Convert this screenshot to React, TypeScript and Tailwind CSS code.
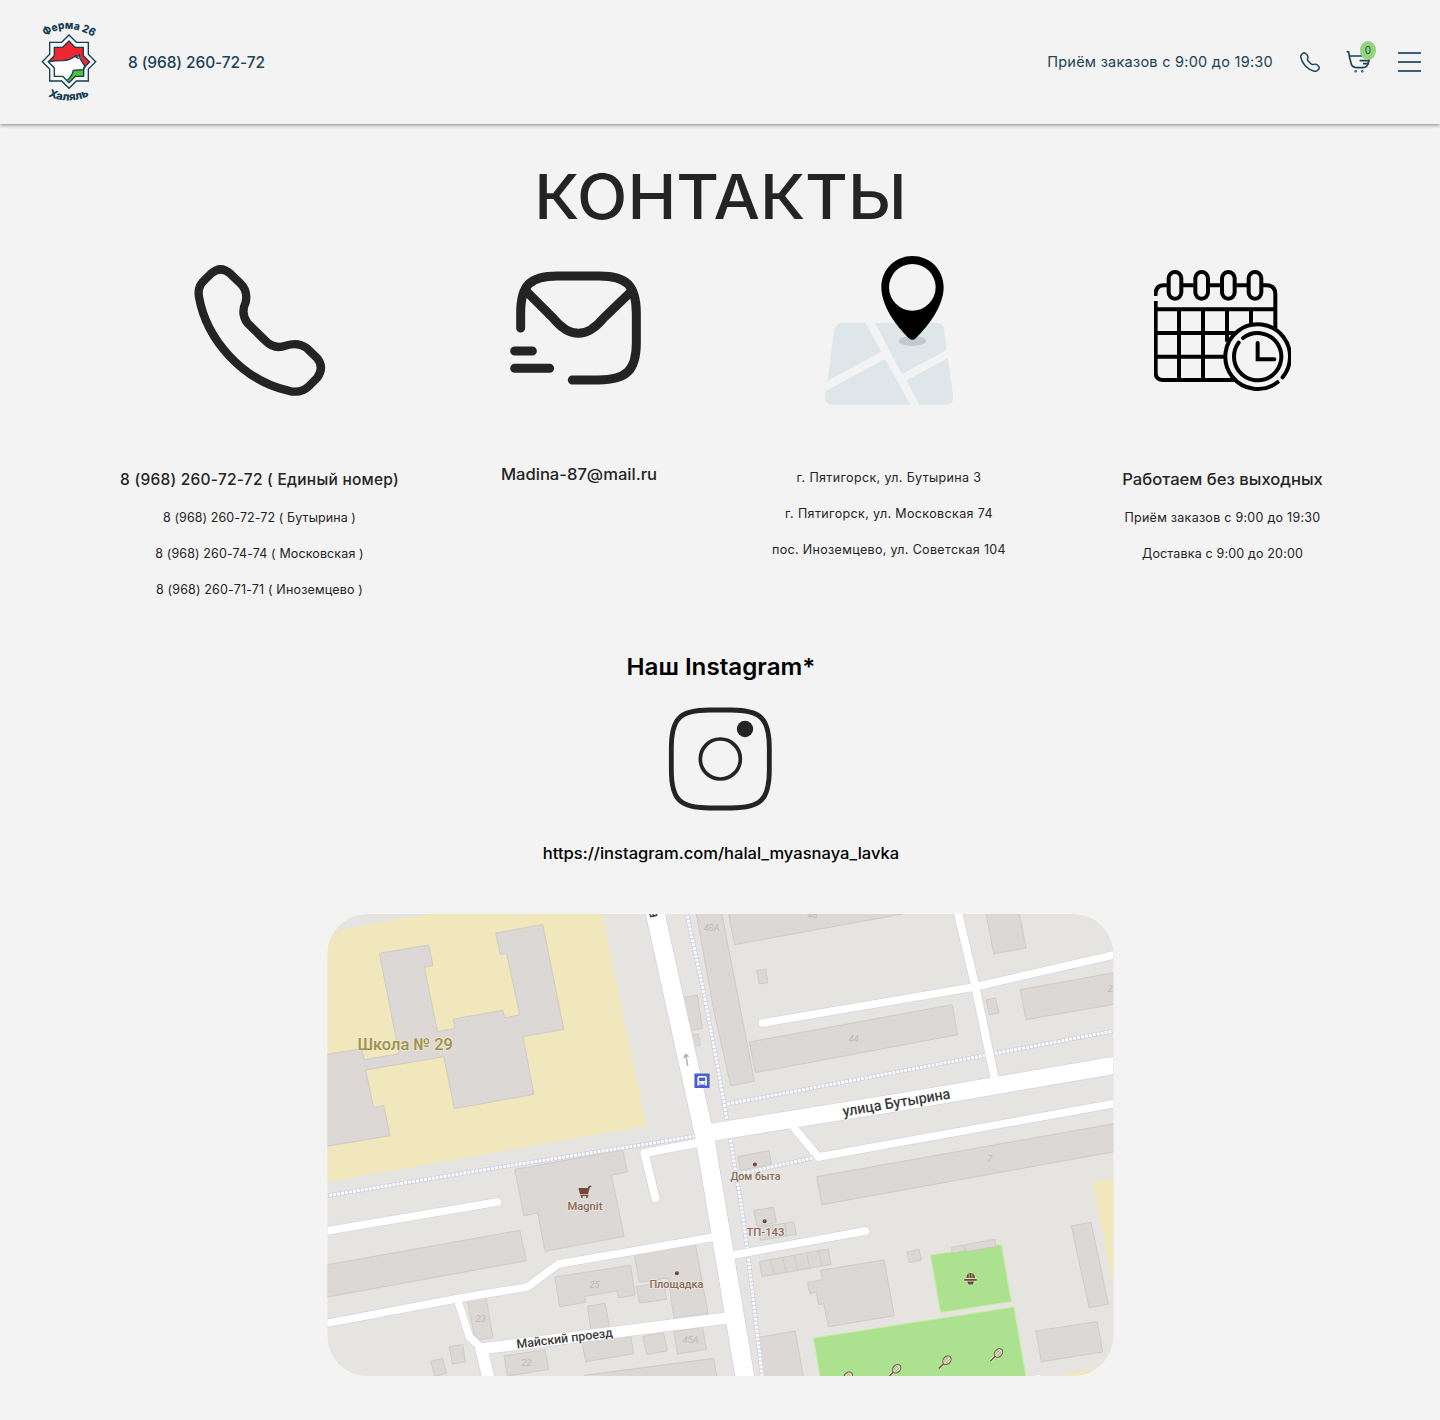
import type { ReactNode } from "react";

const PHONE =
  "M93 70 Q122 44 151 70 L183 101 Q204 122 197 156 Q181 190 203 219 L258 273 Q283 298 318 286 Q354 274 380 293 L411 323 Q434 350 412 382 L386 408 Q362 431 325 421 C190 391 80 270 57 140 Q52 112 69 94 Z";

function PhoneIcon({ className }: { className: string }) {
  return (
    <svg viewBox="42 41 396 396" className={className} fill="none" stroke="currentColor" strokeLinejoin="round">
      <path d={PHONE} />
    </svg>
  );
}

function Logo() {
  return (
    <svg viewBox="0 0 240 285" className="h-[95px] w-20 font-['Inter'] font-extrabold">
      <defs>
        <path id="logo-top" d="M46 64 Q113 16 196 70" />
        <path id="logo-bottom" d="M54 243 Q117 272 184 239" />
      </defs>
      <path
        d="M117 60 L139 82 H175 V118 L197 140 L175 162 V198 H139 L117 220 L95 198 H59 V162 L37 140 L59 118 V82 H95 Z"
        fill="#f6f6f4"
        stroke="#173e52"
        strokeWidth="4"
      />
      <path d="M117 78 L135 97 H160 V122 L179 141 L161 159 V184 H136 L117 203 L98 184 H73 V159 L55 140 L73 122 V97 H98 Z" fill="#fff" />
      <path d="M55 140 L73 122 V97 H98 L117 78 L135 97 H160 V122 L179 141 L166 155 L154 134 L148 120 L136 125 Q118 136 100 137 Q74 137 55 140 Z" fill="#ee2630" />
      <path d="M117 203 L113 194 Q126 185 129 165 L161 163 V184 H136 Z" fill="#52bf3c" />
      <g fill="none" stroke="#173e52" strokeWidth="4" strokeLinejoin="round">
        <path d="M117 78 L135 97 H160 V122 L179 141 L161 159 V184 H136 L117 203 L98 184 H73 V159 L55 140 L73 122 V97 H98 Z" />
        <path d="M55 140 Q74 137 100 137 Q118 136 132 126 L138 122 L143 125 L148 119 L150 130 L165 155 L160 164 L130 166 Q126 184 112 195" />
        <path d="M136 126 L147 131" />
      </g>
      <g fill="#173e52" fontSize="33">
        <text>
          <textPath href="#logo-top" textLength="153" lengthAdjust="spacingAndGlyphs">Ферма 26</textPath>
        </text>
        <text>
          <textPath href="#logo-bottom" textLength="128" lengthAdjust="spacingAndGlyphs">Халяль</textPath>
        </text>
      </g>
    </svg>
  );
}

function CartIcon() {
  return (
    <svg viewBox="946 90 84 72" className="h-6 w-7" fill="none" stroke="#1b4256" strokeWidth="5" strokeLinecap="round">
      <path d="M953 95 L957 96 Q959 112 965 133 Q969 143 984 143 H1000 Q1013 143 1016 128 L1020 108 H960" />
      <path d="M992 122 H1018 M1002 131 H1015" />
      <circle cx="978" cy="153.500" r="1.200" />
      <circle cx="998" cy="153.500" r="1.200" />
    </svg>
  );
}

function MailIcon() {
  return (
    <svg viewBox="990 60 411 348" className="mt-[38px] h-[116px] w-[137px]" fill="none" stroke="#242424" strokeWidth="27" strokeLinecap="round">
      <path d="M1022 234 V190 C1022 105 1050 78 1132 78 H1258 C1340 78 1369 106 1369 190 V278 C1369 362 1339 390 1255 390 H1177" />
      <path d="M1040 125 L1120 205 Q1195 295 1270 205 L1353 125" strokeLinecap="butt" />
      <path d="M1004 303 H1057 M1004 355 H1109" />
    </svg>
  );
}

function PinIcon() {
  return (
    <svg viewBox="42 30 390 453" className="mt-[23px] h-[151px] w-[130px]">
      <g fill="#dee6e9">
        <path d="M97 234 H167 L214 320 L52 408 L73 255 Q77 234 97 234 Z" />
        <path d="M195 234 H381 Q399 235 402 252 L409 316 L276 387 Z" />
        <path d="M225 342 L301 479 H65 Q44 477 45 455 L47 438 Z" />
        <path d="M413 340 L430 455 Q430 477 410 479 H328 L290 406 Z" />
      </g>
      <ellipse cx="307" cy="288" rx="41" ry="15" fill="#c0cacc" />
      <path
        fillRule="evenodd"
        d="M307 33 C255 33 214 74 214 127 C214 180 255 240 297 280 Q307 289 317 280 C359 240 401 180 401 127 C401 74 360 33 307 33 Z M307 57 A70 70 0 1 1 307 197 A70 70 0 1 1 307 57 Z"
        fill="#000"
      />
    </svg>
  );
}

function CalendarIcon() {
  return (
    <svg viewBox="1032 72 411 369" className="mt-[37px] h-[123px] w-[137px]" fill="none" stroke="#000" strokeWidth="12" strokeLinecap="round">
      {[1076, 1156, 1236, 1316].map((x) => (
        <rect key={x} x={x} y="81" width="38" height="80" rx="19" />
      ))}
      <g strokeLinecap="butt">
        <path d="M1036 153 Q1036 121 1060 121 H1071 M1119 121 H1151 M1199 121 H1231 M1279 121 H1311 M1359 121 H1370 Q1396 121 1396 147 V250" />
        <path d="M1037 168 V383 Q1037 405 1059 405 H1277 M1037 193 H1396 M1037 264 H1278 M1037 335 H1248" />
        <path d="M1107 193 V405 M1179 193 V405 M1251 193 V290 M1323 193 V238" />
      </g>
      <circle cx="1343" cy="335" r="97" pathLength="360" strokeDasharray="347.4 12.6" transform="rotate(52.2 1343 335)" />
      <circle cx="1343" cy="335" r="71" pathLength="360" strokeDasharray="342.6 17.4" transform="rotate(232 1343 335)" />
      <path d="M1343 294 V343 H1393" />
    </svg>
  );
}

function InstagramIcon() {
  return (
    <svg viewBox="444 201 312 312" className="mt-[22px] h-[104px] w-[104px]" fill="none" stroke="#242424">
      <path d="M454 325 C454 235 479 210 569 210 H633 C723 210 748 235 748 325 V389 C748 479 723 504 633 504 H569 C479 504 454 479 454 389 Z" strokeWidth="14.500" />
      <circle cx="601" cy="357" r="60" strokeWidth="11" />
      <circle cx="675" cy="267" r="24.500" fill="#242424" stroke="none" />
    </svg>
  );
}

const ROADS: [string, number][] = [
  ["M762 1023 L974 987 L1120 953.500", 7.5],
  ["M956 906 L975 987 L995 1082", 8],
  ["M793 1127 L818 1157 L1120 1102.500", 7.5],
  ["M655 1198 L644 1153 L702 1142", 8],
  ["M320 1232 L497 1202", 7.5],
  ["M320 1324.500 L460 1298 L527 1287 L558 1264 L720 1236", 7.5],
  ["M457 1299 L469 1337 L482 1349", 7.5],
  ["M733 1255 L865 1231", 7.5],
  ["M481 1349 L489 1382", 12],
  ["M484 1348.500 L600 1334 L735 1317", 11],
  ["M707 1133 L900 1102 L1122 1064", 17],
  ["M653 905 L704.500 1138 L724.500 1258 L746 1386", 18.5],
];

const PATHS = [
  "M686 912 L702 986 L717 1065 L730 1140 L740 1200 L747 1250 L762 1378",
  "M727 1104 L1116 1030.500",
  "M325 1196 L507 1166 L653 1143 L694 1136",
  "M743 1173 L812 1158",
];

function Racket({ x, y }: { x: number; y: number }) {
  return (
    <g transform={`translate(${x} ${y}) rotate(45)`} stroke="#755241" fill="none">
      <path d="M0 2 V9" stroke="#e9f3dc" strokeWidth="2.800" />
      <ellipse cx="0" cy="-2.500" rx="3.600" ry="4.800" fill="#d4e8bd" strokeWidth="1" />
      <path d="M-1.300 -6.500 V1.500 M1.300 -6.500 V1.500 M-3.300 -3.700 H3.300 M-3.300 -1 H3.300" strokeWidth=".3" />
      <path d="M0 2 V9" strokeWidth="1.500" />
    </g>
  );
}

type LabelProps = {
  x: number;
  y: number;
  w: number;
  size: number;
  color: string;
  rotate?: number;
  halo?: string;
  children: ReactNode;
};

function Label({ x, y, w, size, color, rotate = 0, halo = "#ece9e6", children }: LabelProps) {
  return (
    <text
      transform={`translate(${x} ${y}) rotate(${rotate})`}
      fontSize={size}
      fill={color}
      textLength={w}
      lengthAdjust="spacingAndGlyphs"
      stroke={halo}
      strokeOpacity=".8"
      strokeWidth="2"
      paintOrder="stroke"
      strokeLinejoin="round"
      className="font-['Roboto'] font-medium"
    >
      {children}
    </text>
  );
}

function StreetMap() {
  return (
    <svg viewBox="327 914 786 462" className="mt-12 h-[462px] w-[786px] translate-x-[0.4px] rounded-[40px]">
      <rect x="327" y="914" width="787" height="462" fill="#e5e4e0" />
      <g fill="#f0e7bc">
        <path d="M327 932 L427 914 H602 L646 1126 L327 1182 Z" />
        <path d="M1092 1182 L1114 1178 V1292 Z" />
        <path d="M1055 1376 L1114 1365 V1376 Z" />
      </g>
      <g fill="#ace18f" stroke="#c9ecaa" strokeWidth="1.200">
        <path d="M930 1255 L1001 1244.500 L1011 1301.500 L940 1312.500 Z" />
        <path d="M813 1338 L1013.500 1307 L1027 1385 L821 1385 Z" />
      </g>

      <g fill="#dcd8d5" stroke="#c9c5c3" strokeWidth="2.400">
        <g transform="translate(320 905) scale(.33333)">
          <path d="M177 145 L325 120 L338 181 L312 187 L351 380 L404 370 L399 342 L547 316 L553 338 L598 330 L559 146 L540 149 L526 84 L667 59 L730 373 L608 395 L640 568 L402 611 L370 455 L136 495 L159 607 L190 602 L209 692 L0 727 V451 L124 431 L132 464 L236 446 Z" />
          <path d="M1088 277 L1131 270 L1146 370 L1110 376 M1112 391 L1133 387 L1140 420 L1120 424" />
        </g>
        <g transform="translate(715 905) scale(.33333)">
          <path d="M-62 0 L18 20 L117 529 L46 542 L-3 325 Z" />
          <path d="M32 -10 L58 119 L560 27 V-10 Z M124 197 L151 193 L157 233 L132 237 Z M102 411 L710 299 L727 389 L120 503 Z" />
          <path d="M805 -10 L835 146 L932 129 L905 -10 Z M914 254 L1230 197 V292 L932 344 Z M812 285 L840 279 L851 323 L822 329 Z" />
        </g>
        <g transform="translate(320 1140) scale(.33333)">
          <path d="M583 88 L907 30 L921 96 L873 105 L911 289 L674 334 L652 219 L611 227 Z M0 378 L598 271 L618 362 L0 475 Z" />
          <path d="M703 411 L931 376 L944 465 L895 474 L891 453 L793 469 L796 487 L718 500 Z" />
          <path d="M942 344 L1125 313 L1163 520 L1061 533 L1042 414 L957 427 Z M948 440 L1030 426 L1039 478 L957 489 Z" />
          <path d="M440 482 L497 474 L518 592 L466 602 Z M801 498 L854 490 L867 562 L812 572 Z M785 606 L930 585 L940 641 L796 665 Z M967 590 L1029 578 L1042 632 L980 644 Z M1060 574 L1146 562 L1158 628 L1072 642 Z" />
          <path d="M551 648 L674 629 L685 688 L561 708 Z M387 620 L427 614 L435 665 L396 672 Z M331 664 L366 655 L378 699 L344 710 Z M792 706 L1180 655 L1192 730 H795 Z" />
        </g>
        <g transform="translate(715 1140) scale(.33333)">
          <path d="M303 110 L1230 -55 V29 L320 194 Z M67 50 L161 32 L168 72 L76 91 Z M115 211 L174 202 L183 247 L125 260 Z M128 262 L235 246 L243 283 L135 301 Z" />
          <path d="M132 365 L338 327 L347 373 L140 410 Z M165 359 L177 403 M201 352 L212 397 M236 346 L248 391 M273 340 L284 384 M308 333 L320 378 M170 256 L176 294 M207 250 L215 288" />
          <path d="M316 391 L506 360 L537 527 L339 560 L325 491 L310 494 L303 457 L283 461 L276 428 L321 419 Z M574 336 L611 328 L618 360 L582 368 Z M708 322 L745 315 L748 332 L711 339 Z M750 314 L838 298 L842 319 L753 335 Z" />
          <path d="M1068 258 L1127 247 L1179 493 L1121 503 Z M961 573 L1145 545 L1162 636 L978 665 Z M130 592 L239 573 L268 730 H145 Z" />
        </g>
      </g>

      <g fill="none" strokeLinejoin="round">
        {PATHS.map((d) => (
          <g key={d}>
            <path d={d} stroke="#d0d2e0" strokeWidth="4.400" />
            <path d={d} stroke="#ffffff" strokeWidth="2.900" strokeDasharray="2.700 1.300" />
          </g>
        ))}
        {ROADS.map(([d, w]) => (
          <path key={d} d={d} stroke="#d6d8e8" strokeWidth={w + 1.8} strokeLinecap="round" />
        ))}
        {ROADS.map(([d, w]) => (
          <path key={d} d={d} stroke="#ffffff" strokeWidth={w} strokeLinecap="round" />
        ))}
      </g>
      <circle cx="1038" cy="1378" r="3" fill="#fff" />

      <g fill="#bdbab7" fontSize="9.500" className="font-['Roboto'] italic">
        <text x="703" y="931">48А</text>
        <text x="807" y="918">48</text>
        <text x="848" y="1042">44</text>
        <text x="1107" y="992">2</text>
        <text x="987" y="1162" fontSize="8.500">7</text>
        <text x="589" y="1288">25</text>
        <text x="475" y="1322">23</text>
        <text x="521" y="1366">22</text>
        <text x="682" y="1343">45А</text>
      </g>

      <Label x={357} y={1049.5} w={95.5} size={16.5} color="#9c9152" halo="#f0e7c8">Школа № 29</Label>
      <Label x={843} y={1116.5} w={109} size={15} color="#3c3c3c" halo="#ffffff" rotate={-9.5}>улица Бутырина</Label>
      <Label x={516.5} y={1348.5} w={97} size={12.5} color="#3c3c3c" halo="#ffffff" rotate={-7}>Майский проезд</Label>
      <Label x={567} y={1210} w={35} size={11} color="#8b6b58">Magnit</Label>
      <Label x={649} y={1288} w={54} size={11} color="#8b6b58">Площадка</Label>
      <Label x={730} y={1180} w={50} size={11} color="#8b6b58">Дом быта</Label>
      <Label x={746} y={1236} w={38} size={11.5} color="#8b6b58">ТП-143</Label>
      <text transform="translate(657 917) rotate(-102)" fontSize="14" fill="#3c3c3c" className="font-['Roboto'] font-medium">в</text>

      <g fill="#6f4a35">
        <circle cx="754.500" cy="1164.500" r="2" />
        <circle cx="764.300" cy="1221.300" r="2" />
        <circle cx="676.500" cy="1273.300" r="2" />
        <path d="M578 1188 H587.500 L588.500 1185.700 H591 V1187 H589.600 L587.600 1194 H579.600 Z M580 1194.800 H588 V1196 H580 Z" />
        <circle cx="581.500" cy="1197" r="1" />
        <circle cx="586.500" cy="1197" r="1" />
      </g>

      <path d="M687.300 1066 L685.500 1055 M683.300 1058 L685.500 1054.500 L688.200 1056.800" fill="none" stroke="#b2aea6" strokeWidth="1.500" />

      <rect x="694" y="1073.500" width="15.200" height="14.500" rx=".8" fill="#4a60cf" />
      <path d="M697 1085.500 V1078 Q697 1076 699 1076 H704.500 Q706.500 1076 706.500 1078 V1085.500 H704.700 V1084.500 H698.800 V1085.500 Z" fill="#fff" />
      <path d="M698.600 1077.600 H704.900 V1081 H698.600 Z" fill="#4a60cf" />
      <path d="M698.500 1083 H700 M703.500 1083 H705" stroke="#4a60cf" strokeWidth="1" />

      <g stroke="#e6f2dc" strokeWidth=".8">
        <path d="M963.800 1279 H976.300 V1280.800 H963.800 Z M966 1278 Q966 1273 970 1273 Q974.500 1273 974.500 1278 Z M966.800 1281.600 H973.600 L972.500 1284.500 H968 Z" fill="#6f4a35" paintOrder="stroke" />
        <path d="M968.800 1273.500 V1278 M971.500 1273.500 V1278" strokeWidth=".6" />
      </g>

      <Racket x={996.3} y={1354.8} />
      <Racket x={944.8} y={1362} />
      <Racket x={894.5} y={1370.5} />
      <Racket x={846} y={1378} />
    </svg>
  );
}

function Column({ icon, children }: { icon: ReactNode; children: ReactNode }) {
  return (
    <div className="flex flex-col items-center whitespace-nowrap text-[#242424]">
      <div className="flex h-[227.5px] items-start">{icon}</div>
      {children}
    </div>
  );
}

const LINE = "text-[12.5px] leading-9";
const HEAD = "text-[15.5px] font-medium leading-10";

export default function App() {
  return (
    <div className="flex h-[1420px] flex-col bg-[#f3f3f3] font-['Inter',sans-serif] text-black">
      <header className="flex h-[124px] shrink-0 items-center text-[#1b4256] shadow-[0_1px_4px_rgba(0,0,0,0.45)]">
        <div className="ml-[30px]">
          <Logo />
        </div>
        <a className="ml-[18px] pt-0.5 text-[15.5px] font-medium tracking-[-0.09px]">8 (968) 260-72-72</a>
        <p className="ml-auto text-[14.5px] tracking-[0.26px]">Приём заказов с 9:00 до 19:30</p>
        <PhoneIcon className="ml-[27px] size-5 stroke-[29]" />
        <div className="relative ml-[25px]">
          <CartIcon />
          <span className="absolute -top-[9px] left-[15px] flex h-[19px] w-4 items-center justify-center rounded-[50%] bg-[#94d57b] text-[10px]">0</span>
        </div>
        <div className="mr-[19px] ml-[25px] flex w-[23px] flex-col gap-[7px]">
          <span className="h-0.5 bg-[#3f5f70]" />
          <span className="h-0.5 bg-[#3f5f70]" />
          <span className="h-0.5 bg-[#3f5f70]" />
        </div>
      </header>

      <main className="flex flex-col items-center">
        <h1 className="mt-9 h-[72px] scale-x-[1.067] pt-px text-[61.5px] leading-[72px] font-medium text-[#242424]">КОНТАКТЫ</h1>

        <section className="grid h-[376px] grid-cols-[319px_319px_302px_365px] self-start pl-[100px]">
          <Column icon={<PhoneIcon className="mt-8 size-[132px] stroke-[25]" />}>
            <p className={`${HEAD} tracking-[0.25px]`}>8 (968) 260-72-72 ( Единый номер)</p>
            <p className={`${LINE} tracking-[0.09px]`}>8 (968) 260-72-72 ( Бутырина )</p>
            <p className={`${LINE} tracking-[0.12px]`}>8 (968) 260-74-74 ( Московская )</p>
            <p className={`${LINE} tracking-[0.16px]`}>8 (968) 260-71-71 ( Иноземцево )</p>
          </Column>
          <Column icon={<MailIcon />}>
            <p className="scale-x-[1.07] text-[15.5px] leading-[30px] font-medium">Madina-87@mail.ru</p>
          </Column>
          <Column icon={<PinIcon />}>
            <p className={`${LINE} tracking-[0.36px]`}>г. Пятигорск, ул. Бутырина 3</p>
            <p className={`${LINE} tracking-[0.37px]`}>г. Пятигорск, ул. Московская 74</p>
            <p className={`${LINE} tracking-[0.33px]`}>пос. Иноземцево, ул. Советская 104</p>
          </Column>
          <Column icon={<CalendarIcon />}>
            <p className={`${HEAD} scale-x-[1.072]`}>Работаем без выходных</p>
            <p className={`${LINE} tracking-[0.27px]`}>Приём заказов с 9:00 до 19:30</p>
            <p className={`${LINE} tracking-[0.16px]`}>Доставка с 9:00 до 20:00</p>
          </Column>
        </section>

        <section className="mt-[41px] flex flex-col items-center">
          <h2 className="ml-px scale-x-[1.05] text-[23px] leading-9 font-semibold">Наш Instagram*</h2>
          <InstagramIcon />
          <a className="mt-[31px] ml-px scale-x-[1.067] text-[15.5px] leading-6 font-medium">https://instagram.com/halal_myasnaya_lavka</a>
        </section>

        <StreetMap />
      </main>
    </div>
  );
}
